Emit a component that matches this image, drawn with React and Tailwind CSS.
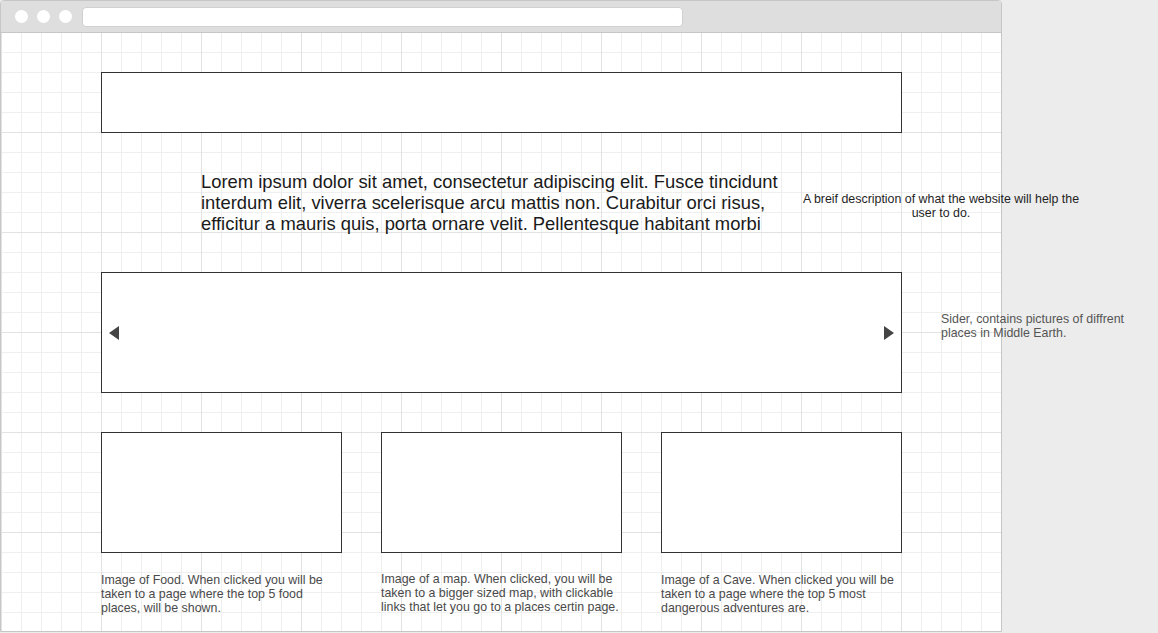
import React from "react";

function TriLeft() {
  return (
    <svg width="10" height="14" viewBox="0 0 10 14">
      <polygon points="10,0 10,14 0,7" fill="#444444" />
    </svg>
  );
}
function TriRight() {
  return (
    <svg width="10" height="14" viewBox="0 0 10 14">
      <polygon points="0,0 0,14 10,7" fill="#444444" />
    </svg>
  );
}

export default function App() {
  return (
    <div className="relative w-[1158px] h-[633px] bg-[#ececec] overflow-hidden font-['Liberation_Sans',Arial,sans-serif]">
      <div className="w-[1002px] h-[632px] flex flex-col border border-[#c6c6c6] rounded-t-[4px] bg-white overflow-hidden">
        {/* title bar */}
        <div className="h-[32px] shrink-0 bg-[#dedede] border-b border-[#c6c6c6] flex items-center pl-[14px]">
          <div className="w-[13px] h-[13px] rounded-full bg-white"></div>
          <div className="w-[13px] h-[13px] rounded-full bg-white ml-[9px]"></div>
          <div className="w-[13px] h-[13px] rounded-full bg-white ml-[9px]"></div>
          <div className="ml-[10px] w-[601px] h-[20px] rounded-[4px] bg-white border border-[#d0d0d0]"></div>
        </div>
        {/* canvas */}
        <div className="flex-1 pl-[100px] bg-white [background-image:linear-gradient(to_right,#e2e2e2_1px,transparent_1px),linear-gradient(to_bottom,#e2e2e2_1px,transparent_1px),linear-gradient(to_right,#efefef_1px,transparent_1px),linear-gradient(to_bottom,#efefef_1px,transparent_1px)] [background-size:100px_100px,100px_100px,20px_20px,20px_20px] [background-position:0_-1px,0_-1px,0_-1px,0_-1px]">
          <div className="w-[801px] h-[61px] mt-[39px] border border-[#333333] bg-white"></div>

          <div className="ml-[100px] mt-[38px] h-[63px] text-[18.4px] leading-[21px] text-[#1a1a1a] whitespace-nowrap overflow-hidden">
            Lorem ipsum dolor sit amet, consectetur adipiscing elit. Fusce tincidunt
            <br />
            interdum elit, viverra scelerisque arcu mattis non. Curabitur orci risus,
            <br />
            efficitur a mauris quis, porta ornare velit. Pellentesque habitant morbi
          </div>

          <div className="w-[801px] h-[121px] mt-[38px] border border-[#333333] bg-white flex items-center justify-between px-[7px]">
            <TriLeft />
            <TriRight />
          </div>

          <div className="flex gap-[39px] mt-[39px]">
            {[
              ["Image of Food. When clicked you will be", "taken to a page where the top 5 food", "places, will be shown."],
              ["Image of a map. When clicked, you will be", "taken to a bigger sized map, with clickable", "links that let you go to a places certin page."],
              ["Image of a Cave. When clicked you will be", "taken to a page where the top 5 most", "dangerous adventures are."],
            ].map((lines, i) => (
              <div key={i} className="w-[241px] flex flex-col">
                <div className="h-[121px] border border-[#333333] bg-white"></div>
                <div className={`${i === 1 ? "mt-[19px]" : "mt-[20px]"} text-[12.4px] leading-[14px] text-[#4a4a4a] whitespace-nowrap`}>
                  {lines[0]}
                  <br />
                  {lines[1]}
                  <br />
                  {lines[2]}
                </div>
              </div>
            ))}
          </div>
        </div>
      </div>

      {/* annotations */}
      <div className="absolute left-[791px] top-[192px] w-[300px] text-center text-[12.4px] leading-[14px] text-[#1f1f1f] whitespace-nowrap">
        A breif description of what the website will help the
        <br />
        user to do.
      </div>
      <div className="absolute left-[941px] top-[312px] text-[12.4px] leading-[14px] text-[#555555] whitespace-nowrap">
        Sider, contains pictures of diffrent
        <br />
        places in Middle Earth.
      </div>
    </div>
  );
}
